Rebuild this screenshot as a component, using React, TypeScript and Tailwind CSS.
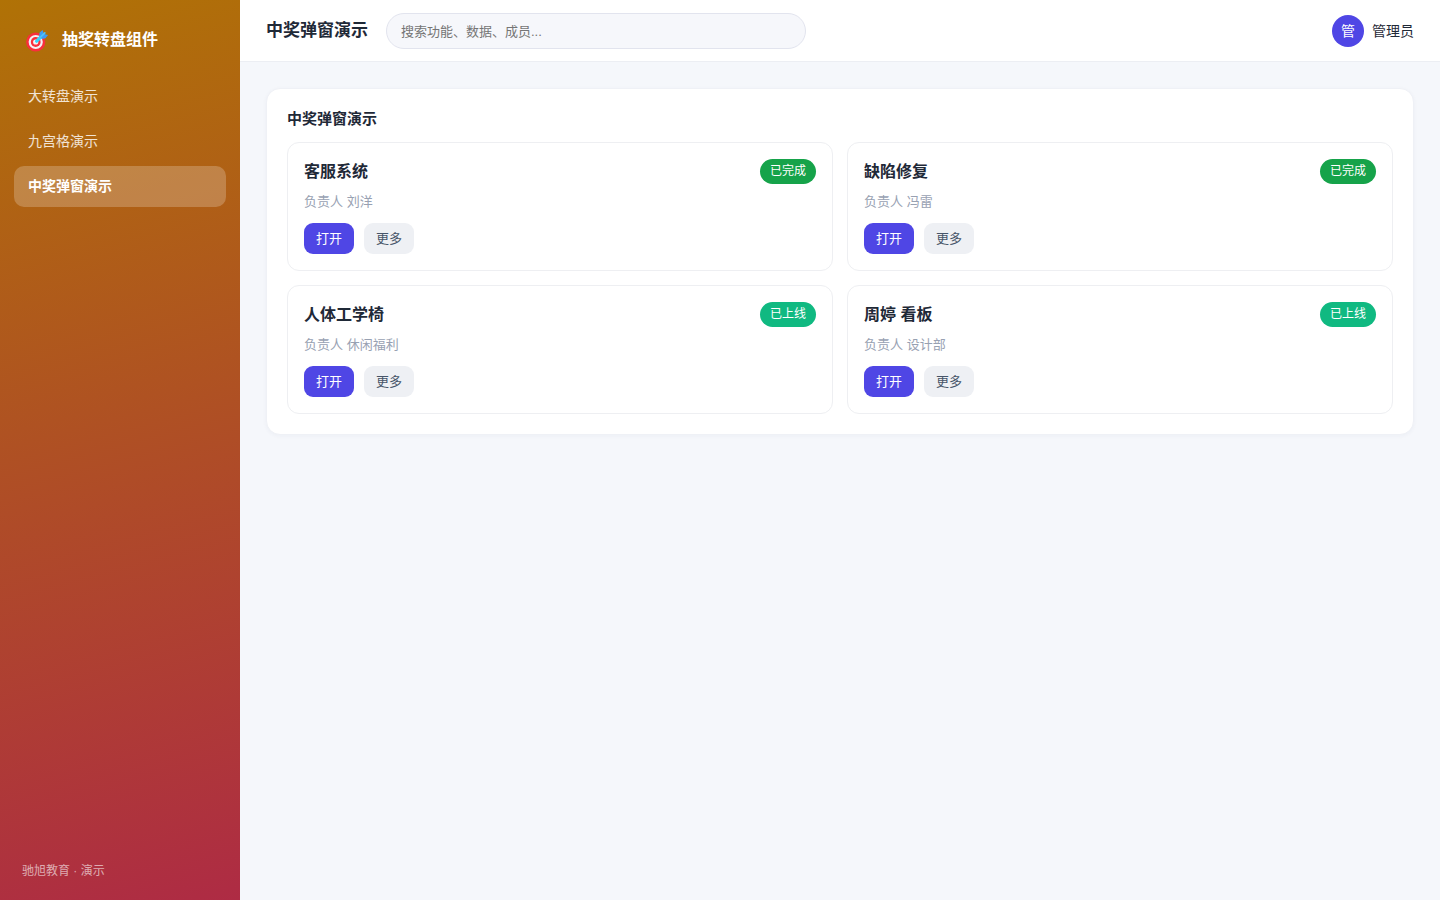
import { useState } from "react"
import clsx from "clsx"

type Status = "done" | "online"

interface Item {
  id: string
  title: string
  owner: string
  status: Status
}

const NAV_ITEMS = ["大转盘演示", "九宫格演示", "中奖弹窗演示"]

const STATUS: Record<Status, { label: string; className: string }> = {
  done: { label: "已完成", className: "bg-[#16a34a]" },
  online: { label: "已上线", className: "bg-[#10b981]" },
}

const ITEMS: Item[] = [
  { id: "1", title: "客服系统", owner: "刘洋", status: "done" },
  { id: "2", title: "缺陷修复", owner: "冯雷", status: "done" },
  { id: "3", title: "人体工学椅", owner: "休闲福利", status: "online" },
  { id: "4", title: "周婷 看板", owner: "设计部", status: "online" },
]

function TargetIcon() {
  return (
    <svg viewBox="0 0 22 22" className="size-[22px] shrink-0" aria-hidden="true">
      <circle cx="9.7" cy="12" r="9.6" fill="#f92f3c" />
      <circle cx="9.7" cy="12" r="7.1" fill="#f4f1f4" />
      <circle cx="9.7" cy="12" r="4.9" fill="#f92f3c" />
      <circle cx="9.7" cy="12" r="2.6" fill="#f4f1f4" />
      <path d="M10.6 11.2 15.8 6" stroke="#35d5fb" strokeWidth="3.2" strokeLinecap="round" />
      <path d="M13.2 6.2 13.6 2.4 16.6 0 17.8 3.4 15 7Z" fill="#3d9cf5" />
      <path d="M15 7 18 4 22 5 19.5 8.2 15.8 9Z" fill="#3d9cf5" />
      <path d="M14 7.6 18.8 2.9" stroke="#4fc3f9" strokeWidth="1.8" strokeLinecap="round" />
    </svg>
  )
}

function Sidebar({ active, onSelect }: { active: string; onSelect: (name: string) => void }) {
  return (
    <aside className="flex w-60 shrink-0 flex-col bg-[linear-gradient(165deg,#b07206,#ae2b44)] px-3.5 pt-5 pb-[19px] text-white">
      <div className="mb-4 flex h-10 items-end gap-3.5 px-3 pb-2">
        <TargetIcon />
        <span className="text-base font-bold">抽奖转盘组件</span>
      </div>
      <nav className="flex flex-col gap-1">
        {NAV_ITEMS.map((name) => (
          <button
            key={name}
            type="button"
            onClick={() => onSelect(name)}
            className={clsx(
              "rounded-[10px] px-3.5 py-2.5 text-left text-sm leading-[21px]",
              name === active ? "bg-white/22 font-bold text-white" : "text-white/82 hover:bg-white/10"
            )}
          >
            {name}
          </button>
        ))}
      </nav>
      <p className="mt-auto px-2 text-xs leading-5 text-white/60">驰旭教育 · 演示</p>
    </aside>
  )
}

function Header({ title }: { title: string }) {
  return (
    <header className="flex items-center gap-[18px] border-b border-[#eceef3] bg-white px-[26px] pt-[13px] pb-3">
      <h1 className="shrink-0 text-[17px] font-bold">{title}</h1>
      <input
        type="search"
        aria-label="搜索"
        placeholder="搜索功能、数据、成员..."
        className="h-9 w-full max-w-[420px] rounded-full border border-[#e2e4ee] bg-[#f6f7fb] px-3.5 text-[13px] outline-none placeholder:text-[#757575]"
      />
      <div className="ml-auto flex shrink-0 items-center gap-2 text-sm">
        <span className="flex size-8 items-center justify-center rounded-full bg-[#4f46e5] text-white">管</span>
        <span>管理员</span>
      </div>
    </header>
  )
}

function ItemCard({ item }: { item: Item }) {
  const status = STATUS[item.status]

  return (
    <article className="rounded-xl border border-[#eeeff2] bg-white p-4">
      <div className="flex items-center justify-between">
        <h3 className="text-base leading-[25px] font-bold">{item.title}</h3>
        <span className={clsx("rounded-full px-2.5 text-xs leading-[25px] text-white", status.className)}>
          {status.label}
        </span>
      </div>
      <p className="mt-2 text-[13px] leading-5 text-[#98a1b2]">负责人 {item.owner}</p>
      <div className="mt-[11px] flex gap-2.5 text-[13px] leading-[19px]">
        <button type="button" className="rounded-[9px] bg-[#4f46e5] px-3 py-1.5 text-white">
          打开
        </button>
        <button type="button" className="rounded-[9px] bg-[#eef0f4] px-3 py-1.5 text-[#475569]">
          更多
        </button>
      </div>
    </article>
  )
}

export default function App() {
  const [active, setActive] = useState("中奖弹窗演示")

  return (
    <div className="flex min-h-screen bg-[#f5f7fb] font-['Liberation_Sans','Noto_Sans_CJK_SC',sans-serif] text-[#1f2937]">
      <Sidebar active={active} onSelect={setActive} />
      <div className="flex min-w-0 flex-1 flex-col">
        <Header title={active} />
        <main className="p-[26px]">
          <section className="rounded-[14px] border border-[#eff1f6] bg-white p-5 shadow-[0_1px_4px_rgba(30,41,90,0.04)]">
            <h2 className="mb-3.5 text-[15px] leading-[19px] font-bold">{active}</h2>
            <div className="grid grid-cols-2 gap-3.5">
              {ITEMS.map((item) => (
                <ItemCard key={item.id} item={item} />
              ))}
            </div>
          </section>
        </main>
      </div>
    </div>
  )
}
